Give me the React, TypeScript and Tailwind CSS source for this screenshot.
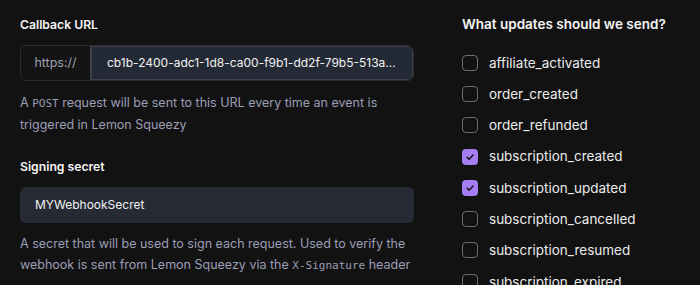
const events = [
  { name: 'affiliate_activated', checked: false },
  { name: 'order_created', checked: false },
  { name: 'order_refunded', checked: false },
  { name: 'subscription_created', checked: true },
  { name: 'subscription_updated', checked: true },
  { name: 'subscription_cancelled', checked: false },
  { name: 'subscription_resumed', checked: false },
  { name: 'subscription_expired', checked: false },
];

const mono = { fontFamily: '"DejaVu Sans Mono", "Liberation Mono", monospace' };

function Checkbox({ checked }: { checked: boolean }) {
  if (checked) {
    return (
      <div className="w-4 h-4 rounded-[4px] bg-[#a47ef2] flex items-center justify-center shrink-0">
        <svg className="w-[10px] h-[10px]" viewBox="0 0 12 12" fill="none" stroke="#161616">
          <path d="M2.5 6.2L5 8.6L9.6 3.6" strokeWidth={1.8} strokeLinecap="round" strokeLinejoin="round" />
        </svg>
      </div>
    );
  }
  return <div className="w-4 h-4 rounded-[4px] border-[1.5px] border-[#6e6e6e] shrink-0" />;
}

export default function App() {
  return (
    <div
      className="w-[700px] h-[285px] overflow-hidden bg-[#121212] flex text-[13.5px]"
      style={{ fontFamily: 'Inter, "Noto Sans", sans-serif' }}
    >
      {/* Left column */}
      <div className="w-[394px] ml-[20px] pt-[15px]">
        <p className="text-[12.2px] font-semibold text-[#f5f5f5] leading-5">Callback URL</p>
        <div className="mt-[10px] flex h-[36px] rounded-[6px] border border-[#2c2c2f] overflow-hidden">
          <div className="w-[70px] flex items-center justify-center bg-[#141414] text-[12.5px] text-[#9ca0b0] border-r border-[#3a3f4a]">
            https://
          </div>
          <div className="flex-1 min-w-0 flex items-center pl-[15px] pr-2 bg-[#242a35] border border-[#3d424d] rounded-r-[6px] text-[12px] text-[#f2f2f2]">
            <span className="truncate">cb1b-2400-adc1-1d8-ca00-f9b1-dd2f-79b5-513a...</span>
          </div>
        </div>
        <p className="mt-[11px] text-[12.5px] text-[#9b9eb5] leading-[21px]">
          A <span className="text-[11px]" style={mono}>POST</span> request will be sent to this URL every time an event is triggered in Lemon Squeezy
        </p>

        <p className="mt-[22px] text-[12.2px] font-semibold text-[#f5f5f5] leading-5">Signing secret</p>
        <div className="mt-[10px] h-[36px] rounded-[6px] bg-[#252a34] flex items-center px-[15px] text-[12px] text-[#f2f2f2]">
          MYWebhookSecret
        </div>
        <p className="mt-[10px] text-[12.5px] text-[#9b9eb5] leading-[21px]">
          A secret that will be used to sign each request. Used to verify the webhook is sent from Lemon Squeezy via the{' '}
          <span className="text-[11px]" style={mono}>X-Signature</span> header
        </p>
      </div>

      {/* Right column */}
      <div className="ml-[48px] pt-[14px]">
        <p className="font-semibold text-[#f5f5f5] leading-5">What updates should we send?</p>
        <div className="mt-[13px] flex flex-col">
          {events.map((e) => (
            <div key={e.name} className="h-[31.3px] flex items-center gap-[11px]">
              <Checkbox checked={e.checked} />
              <span className="text-[#ececec]">{e.name}</span>
            </div>
          ))}
        </div>
      </div>
    </div>
  );
}
